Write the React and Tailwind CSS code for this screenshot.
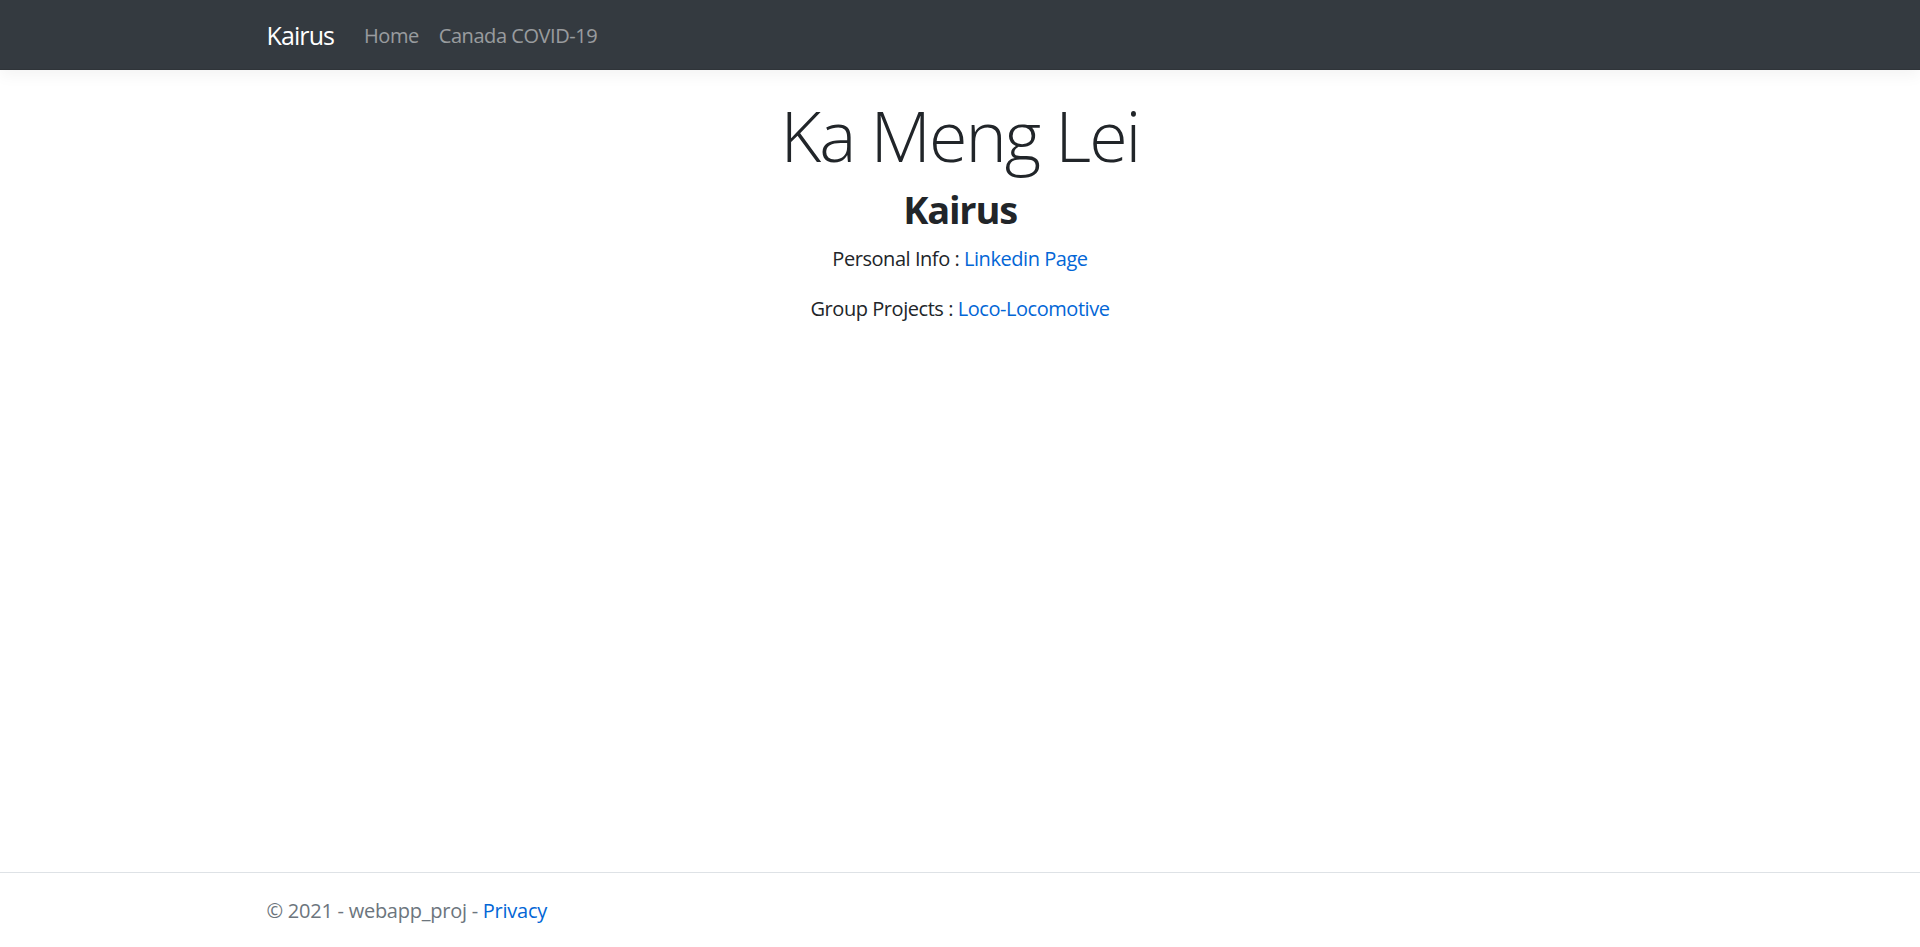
export default function App() {
  return (
    <div className="min-h-screen flex flex-col bg-white text-[#212529] font-['Open_Sans','Noto_Sans',sans-serif] text-[20px] leading-[1.5] tracking-[-0.45px]">
      <header className="mb-[20px]">
        <nav className="h-[70px] bg-[#343a40] shadow-[0_5px_15px_rgba(0,0,0,0.05)] border-b border-[#2f3439]">
          <div className="w-[1425px] mx-auto px-[19px] h-full flex items-center pt-[2px]">
            <a href="#" className="text-[25px] leading-[1.5] text-white mr-[20px] tracking-[-0.9px]">Kairus</a>
            <a href="#" className="px-[10px] text-[rgba(255,255,255,0.5)]">Home</a>
            <a href="#" className="px-[10px] text-[rgba(255,255,255,0.5)]">Canada COVID-19</a>
          </div>
        </nav>
      </header>
      <main className="flex-1 w-[1425px] mx-auto px-[19px] pb-[20px] pt-[3px]">
        <div className="text-center">
          <h1 className="text-[70px] font-light leading-[1.2] mb-[10px] tracking-[-2px]">Ka Meng Lei</h1>
          <h2 className="text-[38px] font-bold leading-[1.2] mb-[11px] tracking-[-1.2px]">Kairus</h2>
          <p className="mb-[20px]">Personal Info : <a href="#" className="text-[#0366d6]">Linkedin Page</a></p>
          <p className="mb-[20px]">Group Projects : <a href="#" className="text-[#0366d6]">Loco-Locomotive</a></p>
        </div>
      </main>
      <footer className="h-[75px] border-t border-[#dee2e6] text-[#6c757d] leading-[74px] pt-[1px]">
        <div className="w-[1425px] mx-auto px-[19px] tracking-[-0.25px]">
          © 2021 - webapp_proj - <a href="#" className="text-[#0366d6]">Privacy</a>
        </div>
      </footer>
    </div>
  );
}
